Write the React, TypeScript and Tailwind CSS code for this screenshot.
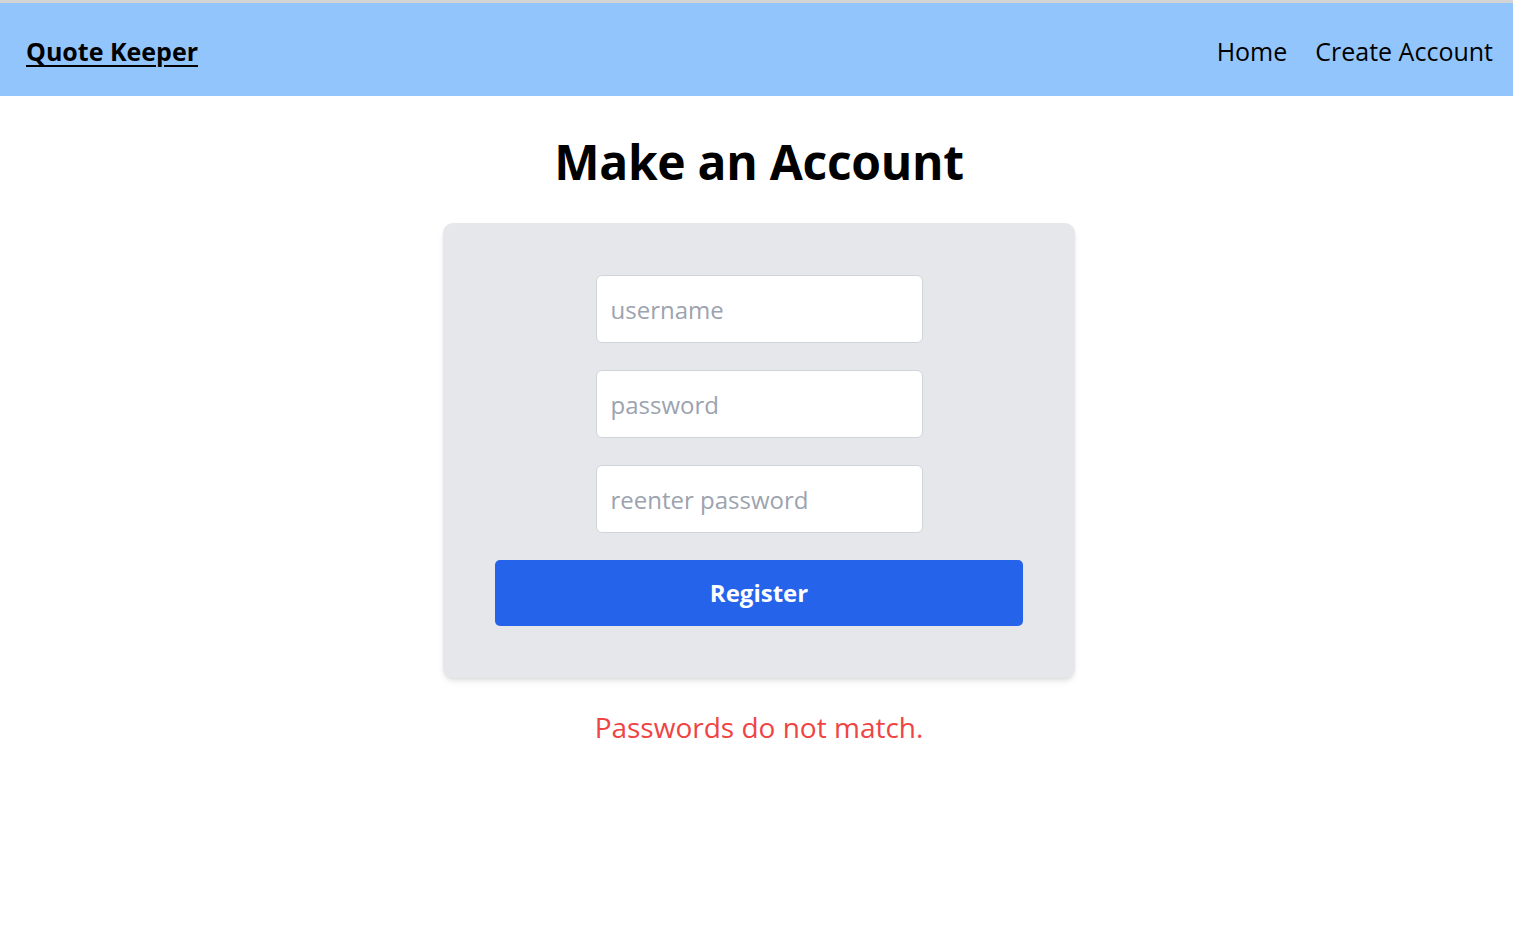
import React, { useState } from "react";

const font = { fontFamily: '"Open Sans", "Noto Sans", sans-serif' };

const NavBar = () => {
  return (
    <nav className="h-[93px] bg-[#93c5fd] flex items-center justify-between pt-[4px] pl-[26px] pr-[20px]">
      <a href="#" className="text-[25px] font-bold text-black underline underline-offset-[4px]">
        Quote Keeper
      </a>
      <div className="flex items-center gap-[28px] text-[25px] text-black">
        <a href="#">Home</a>
        <a href="#">Create Account</a>
      </div>
    </nav>
  );
};

const App = () => {
  const [username, setUsername] = useState("");
  const [password, setPassword] = useState("");
  const [confirm, setConfirm] = useState("");

  return (
    <div className="min-h-screen bg-white border-t-[3px] border-[#d4d4d4]" style={font}>
      <NavBar />
      <main className="flex flex-col items-center pl-[5px]">
        <h1 className="mt-[38px] text-[48px] leading-[56px] font-bold text-black tracking-[-0.3px]">
          Make an Account
        </h1>

        <form
          className="mt-[33px] w-[632px] bg-[#e5e7eb] rounded-[10px] shadow-md p-[52px] flex flex-col items-center gap-[27px]"
          onSubmit={(e) => e.preventDefault()}
        >
          <input
            type="text"
            placeholder="username"
            value={username}
            onChange={(e) => setUsername(e.target.value)}
            className="w-[327px] h-[68px] bg-white border border-[#d1d5db] rounded-[6px] px-[14px] text-[24px] text-black placeholder:text-[#9ca3af] outline-none"
          />
          <input
            type="password"
            placeholder="password"
            value={password}
            onChange={(e) => setPassword(e.target.value)}
            className="w-[327px] h-[68px] bg-white border border-[#d1d5db] rounded-[6px] px-[14px] text-[24px] text-black placeholder:text-[#9ca3af] outline-none"
          />
          <input
            type="password"
            placeholder="reenter password"
            value={confirm}
            onChange={(e) => setConfirm(e.target.value)}
            className="w-[327px] h-[68px] bg-white border border-[#d1d5db] rounded-[6px] px-[14px] text-[24px] text-black placeholder:text-[#9ca3af] outline-none"
          />
          <button
            type="submit"
            className="w-full h-[66px] bg-[#2563eb] rounded-[5px] text-white text-[24px] font-bold"
          >
            Register
          </button>
        </form>

        <p className="mt-[31px] text-[28px] leading-[36px] text-[#ef4444]">Passwords do not match.</p>
      </main>
    </div>
  );
};

export default App;
